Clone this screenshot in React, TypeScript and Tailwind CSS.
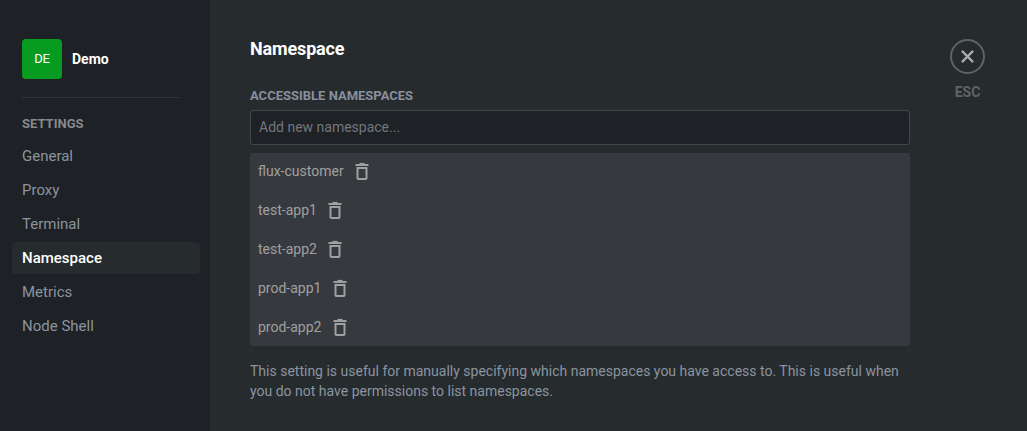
const navItems = ["General", "Proxy", "Terminal", "Namespace", "Metrics", "Node Shell"];
const namespaces = ["flux-customer", "test-app1", "test-app2", "prod-app1", "prod-app2"];

function TrashIcon() {
  return (
    <svg viewBox="0 0 22 22" className="mt-px size-[22px] shrink-0" fill="none" stroke="currentColor">
      <path d="M4.5 4H17.5" strokeWidth="2" />
      <path d="M8.5 2.5h5" strokeWidth="1.2" />
      <path d="M6.5 7h9v10.2q0 .8-.8.8H7.3q-.8 0-.8-.8z" strokeWidth="2" />
    </svg>
  );
}

function CloseIcon() {
  return (
    <svg viewBox="0 0 21 21" className="size-[21px] shrink-0" fill="none" stroke="currentColor" strokeWidth="2.3">
      <path d="M4.9 4.9L16.1 16.1M16.1 4.9L4.9 16.1" />
    </svg>
  );
}

function Sidebar() {
  return (
    <aside className="w-[210px] shrink-0 bg-[#1e2125] pt-[39px] pr-[10px] pl-3">
      <div className="flex items-center gap-[10px] pl-[10px]">
        <div className="flex size-10 items-center justify-center rounded bg-[#079b21] text-[13px] tracking-[-0.2px] text-white">
          DE
        </div>
        <div className="text-[14px] font-bold text-white">Demo</div>
      </div>
      <hr className="mt-[18px] mr-5 ml-[10px] border-[#2f3236]" />
      <h2 className="mt-[16px] pl-[10px] text-[13px] leading-5 font-bold text-[#87898f]">SETTINGS</h2>
      <nav className="mt-[6px] flex flex-col gap-[2px]">
        {navItems.map((item) => (
          <a
            key={item}
            className={
              item === "Namespace"
                ? "h-8 rounded bg-[#262b2d] pl-[10px] text-[15px] leading-8 font-medium text-white"
                : "h-8 rounded pl-[10px] text-[15px] leading-8 text-[#8b949f]"
            }
          >
            {item}
          </a>
        ))}
      </nav>
    </aside>
  );
}

export default function App() {
  return (
    <div className="flex h-[431px] w-[1027px] overflow-hidden bg-[#262b2e] font-['Roboto',sans-serif]">
      <Sidebar />
      <main className="ml-10 w-[660px] shrink-0 pt-[36px]">
        <h1 className="text-[18px] leading-[26px] font-bold tracking-[-0.15px] text-white">Namespace</h1>
        <h3 className="mt-[24px] text-[13px] leading-5 font-bold text-[#87909c]">ACCESSIBLE NAMESPACES</h3>
        <input
          placeholder="Add new namespace..."
          className="mt-1 block h-[35px] w-full rounded-[3px] border border-[#43474a] bg-[#1e2125] px-2 pb-[2px] text-[14px] text-[#8b949f] placeholder:text-[#72777d]"
        />
        <ul className="mt-2 flex flex-col gap-[2px] rounded-[3px] bg-[#36393e]">
          {namespaces.map((name) => (
            <li key={name} className="flex h-[37px] items-center gap-[7.5px] pl-2 text-[14px] text-[#a0a0a0]">
              <span>{name}</span>
              <TrashIcon />
            </li>
          ))}
        </ul>
        <p className="mt-[15px] text-[14px] leading-5 text-[#8b949f]">
          This setting is useful for manually specifying which namespaces you have access to. This is useful when you do
          not have permissions to list namespaces.
        </p>
      </main>
      <div className="ml-10 flex flex-col items-center pt-[39px]">
        <button className="flex size-[35px] items-center justify-center rounded-full border-2 border-[#5f6365] text-[#a9abac]">
          <CloseIcon />
        </button>
        <span className="mt-2 text-[14px] leading-5 font-bold text-[#5f6366]">ESC</span>
      </div>
    </div>
  );
}
